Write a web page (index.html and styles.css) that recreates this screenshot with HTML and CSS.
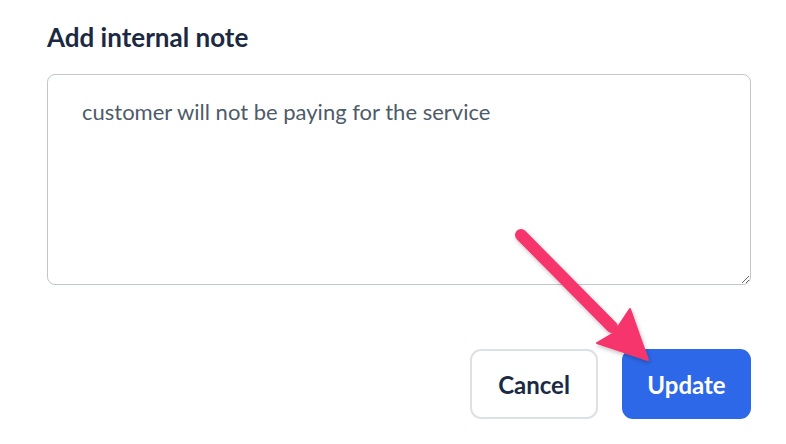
FILE: index.html
```html
<!DOCTYPE html>
<html>
<head>
<meta charset="utf-8">
<link rel="stylesheet" href="styles.css">
</head>
<body>
<div class="panel">
  <h2 class="title">Add internal note</h2>
  <textarea class="note">customer will not be paying for the service</textarea>
  <div class="actions">
    <button class="btn btn-cancel">Cancel</button>
    <button class="btn btn-update">Update</button>
  </div>
  <svg class="arrow" width="786" height="444" viewBox="0 0 786 444">
    <defs>
      <filter id="sh" x="-20%" y="-20%" width="140%" height="140%">
        <feDropShadow dx="1" dy="2" stdDeviation="2" flood-color="#000" flood-opacity="0.25"/>
      </filter>
    </defs>
    <g filter="url(#sh)">
      <line x1="521" y1="235" x2="612" y2="327" stroke="#f5356c" stroke-width="12" stroke-linecap="round"/>
      <polygon points="648,360 597,343 614,333 630,309" fill="#f5356c" stroke="#f5356c" stroke-width="2" stroke-linejoin="round"/>
    </g>
  </svg>
</div>
</body>
</html>
```
FILE: styles.css
```css
html, body {
  margin: 0;
  padding: 0;
  background: #ffffff;
}
.panel {
  position: relative;
  width: 786px;
  height: 444px;
  padding: 20px 35px 0 47px;
  box-sizing: border-box;
  font-family: Lato, "Noto Sans", sans-serif;
}
.title {
  margin: 0;
  font-size: 26px;
  font-weight: 700;
  line-height: 34px;
  color: #1b2a42;
}
.note {
  display: block;
  margin-top: 20px;
  width: 704px;
  height: 211px;
  box-sizing: border-box;
  border: 1px solid #c3c6ca;
  border-radius: 8px;
  padding: 22px 34px;
  font-family: Lato, "Noto Sans", sans-serif;
  font-size: 22px;
  line-height: 30px;
  color: #4e5b69;
  resize: both;
  outline: none;
}
.actions {
  display: flex;
  justify-content: flex-end;
  gap: 24px;
  margin-top: 64px;
  width: 704px;
}
.btn {
  height: 70px;
  border-radius: 11px;
  font-family: Lato, "Noto Sans", sans-serif;
  font-size: 24px;
  font-weight: 700;
  cursor: pointer;
}
.btn-cancel {
  width: 128px;
  background: #ffffff;
  border: 2px solid #dde1e6;
  color: #1b2a42;
}
.btn-update {
  width: 129px;
  background: #2d68e8;
  border: none;
  color: #ffffff;
}
.arrow {
  position: absolute;
  left: 0;
  top: 0;
  pointer-events: none;
}
```
